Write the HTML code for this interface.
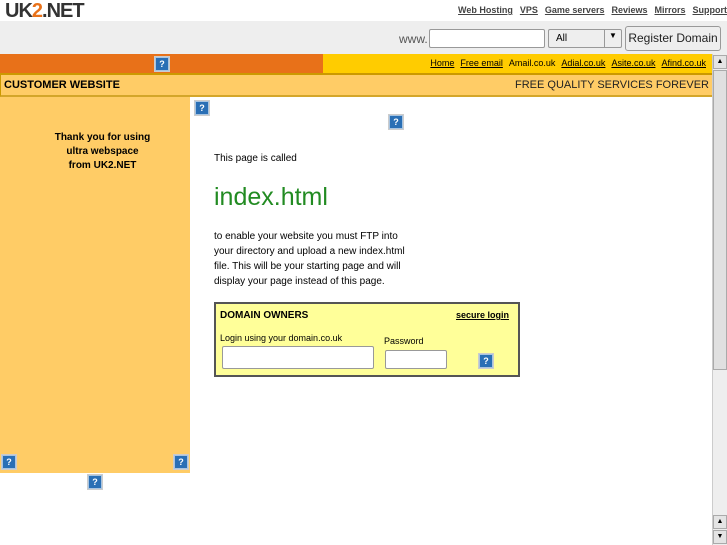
<!DOCTYPE html>
<html><head><meta charset="utf-8"><style>
*{margin:0;padding:0;box-sizing:border-box}
body{width:727px;height:545px;overflow:hidden;position:relative;font-family:"Liberation Sans",sans-serif;background:#fff;color:#000}
.a{position:absolute;white-space:nowrap}
.q{position:absolute;width:14px;height:14px;background:#2a6fb5;border:1px solid #a8c4e0;outline:1px solid #ccc;color:#fff;font:bold 9px "Liberation Sans",sans-serif;text-align:center;line-height:12px}
.tl a{color:#444;text-decoration:underline;margin-left:7px}
.yl a{color:#000;text-decoration:underline;margin-left:6px}
</style></head><body>
<div class="a" style="left:5px;top:0px;font-size:20px;font-weight:bold;color:#333;letter-spacing:-1px">UK<span style="color:#e87119">2</span>.NET</div>
<div class="a tl" style="right:0;top:5px;font-size:9px;font-weight:bold;color:#444"><a>Web Hosting</a><a>VPS</a><a>Game servers</a><a>Reviews</a><a>Mirrors</a><a>Support</a></div>
<div class="a" style="left:0;top:21px;width:727px;height:33px;background:#eeeeee"></div>
<div class="a" style="left:399px;top:32px;font-size:12px;color:#555">www.</div>
<div class="a" style="left:429px;top:29px;width:116px;height:19px;background:#fff;border:1px solid #999;border-radius:2px"></div>
<div class="a" style="left:548px;top:29px;width:74px;height:19px;background:#eee;border:1px solid #999;border-radius:2px;font-size:10px;padding:3px 7px">All</div>
<div class="a" style="left:604px;top:30px;width:1px;height:17px;background:#999"></div>
<div class="a" style="left:609px;top:31px;font-size:8px">▼</div>
<div class="a" style="left:625px;top:26px;width:96px;height:25px;background:#eee;border:1px solid #999;border-radius:3px;font-size:12px;color:#222;text-align:center;line-height:23px">Register Domain</div>
<div class="a" style="left:0;top:54px;width:323px;height:19px;background:#e87119"></div>
<div class="a" style="left:323px;top:54px;width:389px;height:19px;background:#ffcc00"></div>
<div class="q" style="left:155px;top:57px">?</div>
<div class="a yl" style="right:21px;top:58px;font-size:9px"><a>Home</a><a>Free email</a><span style="margin-left:6px">Amail.co.uk</span><a>Adial.co.uk</a><a>Asite.co.uk</a><a>Afind.co.uk</a></div>
<div class="a" style="left:0;top:73px;width:712px;height:24px;background:#ffcc66;border-top:2px solid #cc9900;border-bottom:2px solid #d4a62a;border-left:1px solid #cc9900"></div>
<div class="a" style="left:4px;top:79px;font-size:11px;font-weight:bold">CUSTOMER WEBSITE</div>
<div class="a" style="right:18px;top:79px;font-size:11px;color:#222">FREE QUALITY SERVICES FOREVER</div>
<div class="a" style="left:0;top:97px;width:190px;height:376px;background:#ffcc66"></div>
<div class="a" style="left:30px;top:131px;width:145px;font-size:10px;font-weight:bold;text-align:center;line-height:14px">Thank you for using<br>ultra webspace<br>from UK2.NET</div>
<div class="q" style="left:2px;top:455px">?</div>
<div class="q" style="left:174px;top:455px">?</div>
<div class="q" style="left:88px;top:475px">?</div>
<div class="q" style="left:195px;top:101px">?</div>
<div class="q" style="left:389px;top:115px">?</div>
<div class="a" style="left:214px;top:153px;font-size:10px">This page is called</div>
<div class="a" style="left:214px;top:183px;font-size:25px;color:#228b22">index.html</div>
<div class="a" style="left:214px;top:229px;width:200px;font-size:10px;line-height:15px;white-space:normal">to enable your website you must FTP into your directory and upload a new index.html file. This will be your starting page and will display your page instead of this page.</div>
<div class="a" style="left:214px;top:302px;width:306px;height:75px;background:#ffff99;border:2px solid #555"></div>
<div class="a" style="left:220px;top:310px;font-size:10px;font-weight:bold">DOMAIN OWNERS</div>
<div class="a" style="left:456px;top:310px;font-size:9px;font-weight:bold;text-decoration:underline">secure login</div>
<div class="a" style="left:220px;top:333px;font-size:9px">Login using your domain.co.uk</div>
<div class="a" style="left:384px;top:336px;font-size:9px">Password</div>
<div class="a" style="left:222px;top:346px;width:152px;height:23px;background:#fff;border:1px solid #999;border-radius:2px"></div>
<div class="a" style="left:385px;top:350px;width:62px;height:19px;background:#fff;border:1px solid #999;border-radius:2px"></div>
<div class="q" style="left:479px;top:354px">?</div>
<div class="a" style="left:712px;top:54px;width:15px;height:491px;background:#eee;border-left:1px solid #ccc"></div>
<div class="a" style="left:713px;top:55px;width:14px;height:14px;background:#e4e4e4;border:1px solid #aaa;font-size:7px;text-align:center;line-height:12px">▲</div>
<div class="a" style="left:713px;top:70px;width:14px;height:300px;background:#e0e0e0;border:1px solid #aaa"></div>
<div class="a" style="left:713px;top:515px;width:14px;height:14px;background:#e4e4e4;border:1px solid #aaa;font-size:7px;text-align:center;line-height:12px">▲</div>
<div class="a" style="left:713px;top:530px;width:14px;height:14px;background:#e4e4e4;border:1px solid #aaa;font-size:7px;text-align:center;line-height:12px">▼</div>
</body></html>
